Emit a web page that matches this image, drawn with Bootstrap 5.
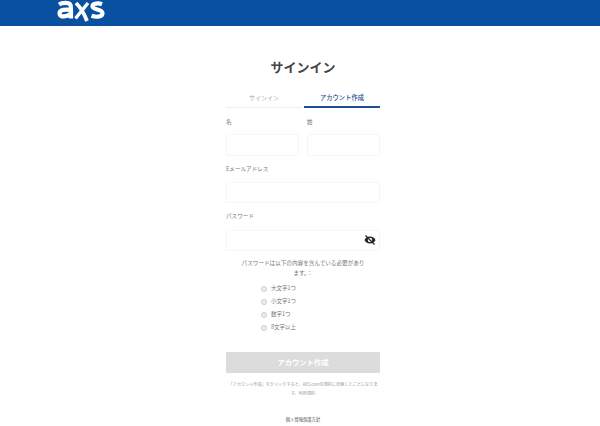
<!DOCTYPE html>
<html lang="ja"><head><meta charset="utf-8"><title>サインイン</title>
<link href="https://cdn.jsdelivr.net/npm/bootstrap@5.3.0/dist/css/bootstrap.min.css" rel="stylesheet">
<style>
html,body{height:426px;overflow:hidden}
body{font-family:"Noto Sans CJK JP","Liberation Sans",sans-serif;color:#555;background:#fff}
.topbar{height:26px;background:#0a50a0;padding-left:55px}
.brand-mark{display:block;width:50px;height:24px}
.panel{width:154px;margin-left:226px}
.heading{font-size:13px;font-weight:700;color:#444;line-height:18px;margin:32px 0 17px;text-align:center;width:154px}
.tabbar{line-height:10px}
.tabitem{flex:1;text-align:center;font-size:6px;border-bottom:1px solid #eee;color:#aaa;height:15px}
.tabitem.on{border-bottom:2px solid #1d4f94;color:#1d4f94;font-size:6.300px;font-weight:500;margin-left:2px}
.lbl{font-size:5.600px;line-height:10px;color:#777;display:block;margin:0 0 7px}
.fld{height:21px;border:1px solid #f6f6f6;border-radius:1px;background:#fff;padding:0;display:block;width:100%}
.namerow{margin-top:9px;gap:8px}
.namerow>div{flex:1}
.namerow .fld{height:22px}
.block-email{margin-top:8px}
.block-email .lbl{margin-bottom:8px}
.block-pass{margin-top:8px}
.block-pass .lbl{margin-bottom:9px}
.eye{position:absolute;right:4px;top:4px;width:12px;height:12px}
.pwnote{font-size:5.600px;line-height:10px;color:#777;text-align:center;margin:7px 14px 4px}
.rules{margin:0;padding:0 0 0 35px;list-style:none;font-size:5.500px;color:#777}
.rules li{height:13px;line-height:13px;display:flex;align-items:center;gap:4px}
.dot{width:6px;height:6px;border:1px solid #ccc;border-radius:50%;background:#eee}
.go{display:block;width:100%;height:21px;margin-top:18px;background:#dcdcdc;border:0;border-radius:0;color:#fff;font-size:7.300px;font-weight:700;padding:0;line-height:21px}
.terms{font-size:4.150px;line-height:9px;color:#999;text-align:center;margin:7px 0 0}
.foot{font-size:4.300px;line-height:8px;color:#555;text-align:center;margin:17px 0 0}
</style></head><body>
<header class="topbar"><svg class="brand-mark" viewBox="0 0 50 24" role="img" aria-label="AXS" fill="none" stroke="#fff" stroke-width="4.200"><path d="M4 4.500c3-2 10-2.500 11.500 0.500 0.800 2 0.500 9 0.500 13.500M16 9.800c-5-0.500-11.500-0.500-11.500 3.700 0 4.500 8.500 3.500 11.500-0.500"/><path d="M21 3c4 4 8 10 11 18" stroke-width="3.800"/><path d="M33 3L20.500 18.500" stroke-width="3.400"/><path d="M47 4.300c-3-1.300-9.500-1.300-9.500 2 0 4 10 2.500 10 7 0 4-7 4-11 2.500"/></svg></header>
<main class="panel">
<h1 class="heading">サインイン</h1>
<div class="d-flex tabbar"><div class="tabitem">サインイン</div><div class="tabitem on">アカウント作成</div></div>
<div class="d-flex namerow"><div><label class="lbl">名</label><input class="fld" aria-label="名"></div><div><label class="lbl">姓</label><input class="fld" aria-label="姓"></div></div>
<div class="block-email"><label class="lbl">Eメールアドレス</label><input class="fld" aria-label="Eメールアドレス"></div>
<div class="block-pass"><label class="lbl">パスワード</label><div class="position-relative"><input class="fld" aria-label="パスワード">
<svg class="eye" viewBox="0 0 24 24"><path fill="#222" d="M12 5C7 5 2.700 8 1 12c1.700 4 6 7 11 7s9.300-3 11-7c-1.700-4-6-7-11-7zm0 11.500a4.500 4.500 0 1 1 0-9 4.500 4.500 0 0 1 0 9z"/><path stroke="#222" stroke-width="2.400" d="M3 3l18 18"/></svg></div></div>
<p class="pwnote">パスワードは以下の内容を含んでいる必要があります。：</p>
<ul class="rules">
<li><span class="dot"></span>大文字1つ</li><li><span class="dot"></span>小文字1つ</li><li><span class="dot"></span>数字1つ</li><li><span class="dot"></span>8文字以上</li>
</ul>
<button class="go" disabled>アカウント作成</button>
<p class="terms">「アカウント作成」をクリックすると、AXS.comの規約に同意したことになります。利用規約</p>
<p class="foot">個人情報保護方針</p>
</main>
</body></html>
